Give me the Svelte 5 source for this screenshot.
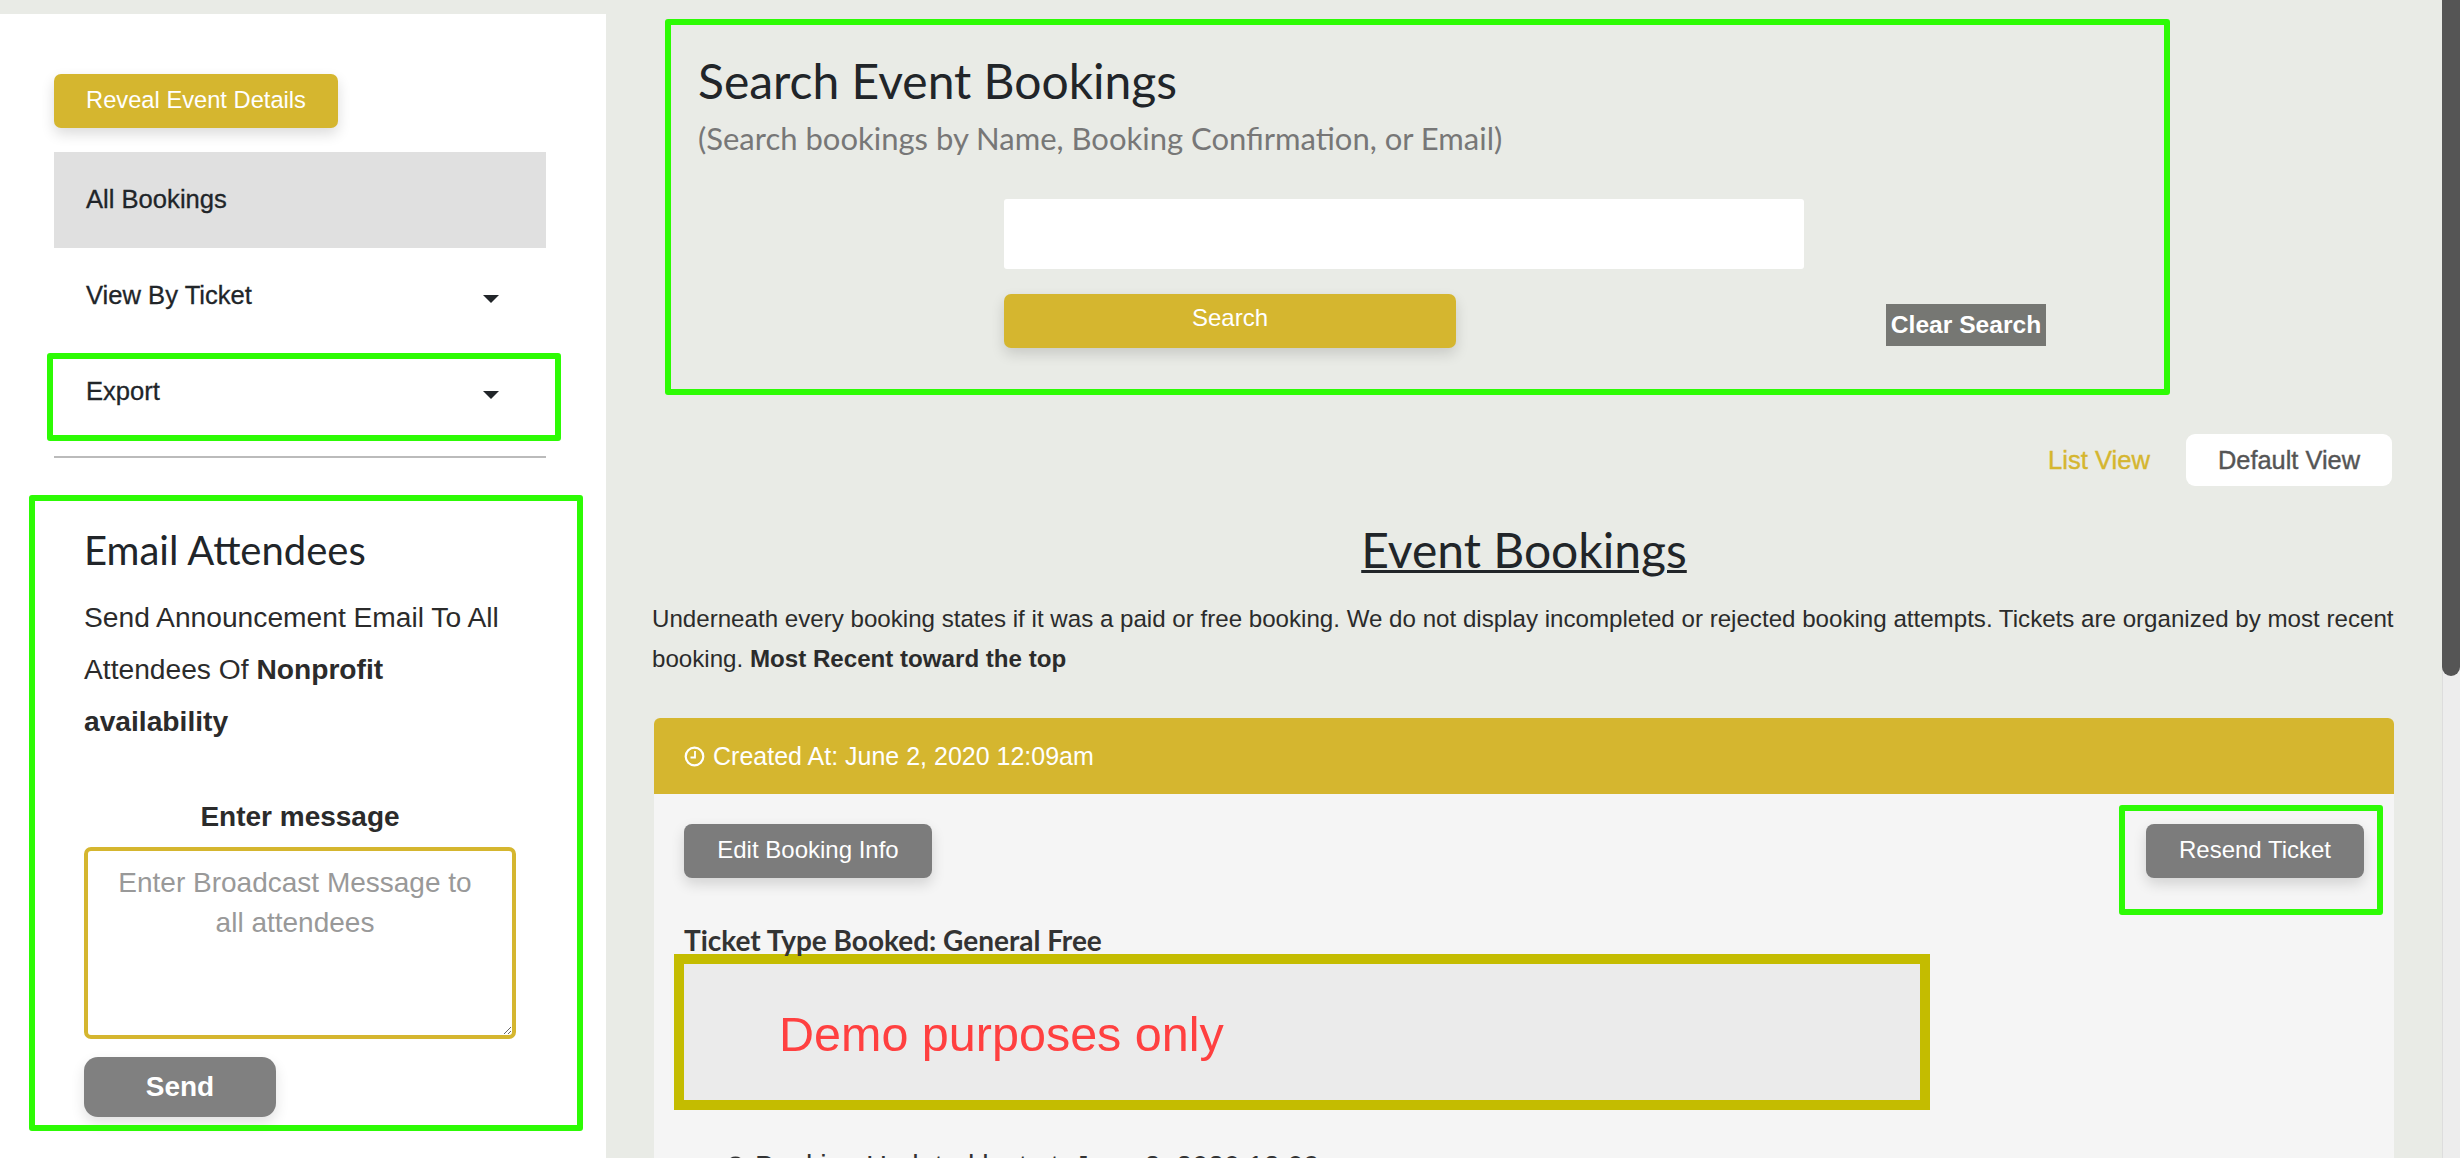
<script lang="ts">
	const navItems = [
		{ label: 'All Bookings', active: true, caret: false },
		{ label: 'View By Ticket', active: false, caret: true },
		{ label: 'Export', active: false, caret: true }
	];
</script>

<div class="page">
	<aside class="sidebar">
		<button class="reveal-btn">Reveal Event Details</button>
		<nav class="nav">
			{#each navItems as item}
				<div class="nav-item" class:active={item.active}>
					<span>{item.label}</span>
					{#if item.caret}<span class="caret"></span>{/if}
				</div>
			{/each}
		</nav>
		<hr class="nav-rule" />

		<section class="email">
			<h3 class="email-title">Email Attendees</h3>
			<p class="email-text">Send Announcement Email To All Attendees Of <b>Nonprofit availability</b></p>
			<div class="email-label">Enter message</div>
			<textarea class="email-input" placeholder="Enter Broadcast Message to all attendees"></textarea>
			<button class="send-btn">Send</button>
		</section>
	</aside>

	<main class="main">
		<section class="search">
			<h2 class="search-title">Search Event Bookings</h2>
			<div class="search-sub">(Search bookings by Name, Booking Confirmation, or Email)</div>
			<div class="search-form">
				<input class="search-input" type="text" />
				<div class="search-actions">
					<button class="search-btn">Search</button>
					<button class="clear-btn">Clear Search</button>
				</div>
			</div>
		</section>

		<div class="views">
			<span class="list-view">List View</span>
			<span class="default-view">Default View</span>
		</div>

		<h2 class="bookings-title">Event Bookings</h2>
		<p class="bookings-text">Underneath every booking states if it was a paid or free booking. We do not display incompleted or rejected booking attempts. Tickets are organized by most recent booking. <b>Most Recent toward the top</b></p>

		<article class="card">
			<header class="card-head">
				<svg class="clock" width="21" height="21" viewBox="0 0 21 21" fill="none">
					<circle cx="10.5" cy="10.5" r="8.8" stroke="white" stroke-width="2.2"/>
					<path d="M11 5v6.5H6.5" stroke="white" stroke-width="1.8"/>
				</svg>
				<span>Created At: June 2, 2020 12:09am</span>
			</header>
			<div class="card-body">
				<div class="card-actions">
					<button class="grey-btn edit">Edit Booking Info</button>
					<button class="grey-btn resend">Resend Ticket</button>
				</div>
				<div class="ticket-type">Ticket Type Booked: General Free</div>
				<div class="demo"><span>Demo purposes only</span></div>
				<div class="updated">
					<svg width="21" height="21" viewBox="0 0 21 21" fill="none">
						<circle cx="10.5" cy="10.5" r="8.8" stroke="#333" stroke-width="2.2"/>
						<path d="M11 5v6.5H6.5" stroke="#333" stroke-width="1.8"/>
					</svg>
					<span>Booking Updated last at: June 2, 2020 12:09</span>
				</div>
			</div>
		</article>
	</main>

	<div class="scrollbar"><div class="thumb"></div></div>

	<!-- annotation frames drawn over the page -->
	<div class="mark mark-export"></div>
	<div class="mark mark-email"></div>
	<div class="mark mark-search"></div>
	<div class="mark mark-resend"></div>
</div>

<style>
	:global(body) { margin: 0; background: #e9ebe6; font-family: "Liberation Sans", Arial, sans-serif; color: #212529; }

	.page { position: relative; display: flex; height: 1158px; overflow: hidden; }
	button { font-family: inherit; border: none; cursor: pointer; color: #fff; padding: 0; }

	/* ── Sidebar ── */
	.sidebar {
		width: 606px; flex-shrink: 0; margin-top: 14px; background: #fff;
		padding: 60px 60px 0 54px; box-sizing: border-box;
	}
	.reveal-btn {
		display: block; width: 284px; height: 54px; background: #d5b62f; border-radius: 7px;
		font-size: 23.7px; padding-bottom: 2px; box-shadow: 0 6px 14px rgba(0,0,0,0.14);
	}
	.nav { margin-top: 24px; }
	.nav-item {
		display: flex; justify-content: space-between; align-items: flex-start;
		height: 96px; box-sizing: border-box; padding: 33px 32px 0 32px;
		font-size: 25.6px; line-height: 28px; -webkit-text-stroke: 0.3px #212529;
	}
	.nav-item.active { background: #e0e0e0; }
	.caret {
		width: 0; height: 0; margin: 14px 15px 0 0;
		border-left: 8px solid transparent; border-right: 8px solid transparent; border-top: 8px solid #212529;
	}
	.nav-rule { margin: 16px 0 0; border: none; border-top: 2px solid #bbb; }

	.email { padding: 0 0 0 30px; margin-top: 69px; }
	.email-title { margin: 0; font-family: Lato, sans-serif; font-weight: 400; font-size: 40px; line-height: 46px; }
	.email-text { margin: 18px 0 0; font-size: 28.2px; line-height: 52px; color: #2b2b2b; width: 430px; }
	.email-label { margin: 52px 0 0; width: 432px; text-align: center; font-size: 28px; line-height: 36px; font-weight: 700; color: #2b2b2b; }
	.email-input {
		display: block; width: 432px; height: 192px; box-sizing: border-box; margin-top: 12px;
		border: 4px solid #d5b62f; border-radius: 7px; background: #fff; outline: none;
		padding: 12px 29px 12px 19px; text-align: center; font-family: inherit; font-size: 28px; line-height: 40px;
	}
	.email-input::placeholder { color: #999; opacity: 1; }
	.send-btn {
		display: block; margin-top: 18px; width: 192px; height: 60px; background: #808080; border-radius: 14px;
		font-size: 28px; font-weight: 700; box-shadow: 0 6px 14px rgba(0,0,0,0.12);
	}

	/* ── Main ── */
	.main { flex: 1; min-width: 0; padding: 0 48px 0 48px; }

	.search { height: 434px; padding: 56px 0 0 44px; box-sizing: border-box; }
	.search-title { margin: 0; font-family: Lato, sans-serif; font-weight: 400; font-size: 48px; line-height: 50px; }
	.search-sub { margin-top: 13px; font-family: Lato, sans-serif; font-size: 31px; line-height: 38px; color: #777; }
	.search-form { margin: 42px 0 0 306px; width: 1042px; }
	.search-input {
		display: block; width: 800px; height: 70px; box-sizing: border-box;
		background: #fff; border: none; border-radius: 3px; outline: none;
	}
	.search-actions { display: flex; align-items: flex-start; margin-top: 25px; }
	.search-btn {
		width: 452px; height: 54px; background: #d5b62f; border-radius: 7px; font-size: 24px; padding-bottom: 6px;
		box-shadow: 0 6px 14px rgba(0,0,0,0.14);
	}
	.clear-btn {
		width: 160px; height: 42px; margin: 10px 0 0 430px; background: #767773;
		font-size: 24.6px; font-weight: 700; border-radius: 0;
	}

	.views { display: flex; justify-content: flex-end; align-items: center; gap: 36px; height: 52px; }
	.list-view { color: #d5b62f; font-size: 25.6px; -webkit-text-stroke: 0.4px #d5b62f; }
	.default-view {
		display: flex; align-items: center; justify-content: center; width: 206px; height: 52px;
		background: #fff; border-radius: 9px; color: #555; font-size: 25.4px; -webkit-text-stroke: 0.4px #555;
		margin-right: 2px;
	}

	.bookings-title {
		margin: 35px 0 0; text-align: center; font-family: Lato, sans-serif; font-weight: 400;
		font-size: 48px; line-height: 58px; text-decoration: underline; text-decoration-thickness: 3px;
	}
	.bookings-text { margin: 20px 0 0 -2px; font-size: 24.13px; line-height: 40px; color: #2b2b2b; }

	.card { margin: 39px 0 0; background: #f5f5f5; border-radius: 6px 6px 0 0; }
	.card-head {
		display: flex; align-items: center; gap: 8px; height: 76px; padding-left: 30px;
		background: #d5b62f; color: #fff; font-size: 25px; border-radius: 6px 6px 0 0;
	}
	.card-body { padding: 30px 30px 0; }
	.card-actions { display: flex; justify-content: space-between; }
	.grey-btn {
		height: 54px; background: #7c7c7c; border-radius: 8px; font-size: 24px; padding-bottom: 2px;
		box-shadow: 0 6px 14px rgba(0,0,0,0.14);
	}
	.edit { width: 248px; }
	.resend { width: 218px; }
	.ticket-type { margin-top: 45px; font-family: Lato, sans-serif; font-weight: 700; font-size: 28px; line-height: 34px; color: #333; }
	.demo {
		display: flex; align-items: center; box-sizing: border-box; width: 1256px; height: 156px;
		margin: -3px 0 0 -10px; padding: 4px 0 0 95px; border: 10px solid #c4bc00; background: #ebebeb;
		color: #ff4040; font-size: 48.5px;
	}
	.updated { display: flex; align-items: center; gap: 9px; margin: 40px 0 0 41px; font-size: 28.6px; line-height: 32px; color: #333; }

	/* ── Scrollbar ── */
	.scrollbar { width: 18px; flex-shrink: 0; background: #ededed; border-left: 1px solid #ddd; box-sizing: border-box; }
	.thumb { height: 676px; background: #555; border-radius: 0 0 9px 9px; margin-left: -1px; }

	/* ── Annotation frames ── */
	.mark { position: absolute; box-sizing: border-box; border: 6px solid #2dfb04; border-radius: 3px; }
	.mark-export { left: 47px; top: 353px; width: 514px; height: 88px; }
	.mark-email { left: 29px; top: 495px; width: 554px; height: 636px; }
	.mark-search { left: 665px; top: 19px; width: 1505px; height: 376px; }
	.mark-resend { left: 2119px; top: 805px; width: 264px; height: 110px; }
</style>
